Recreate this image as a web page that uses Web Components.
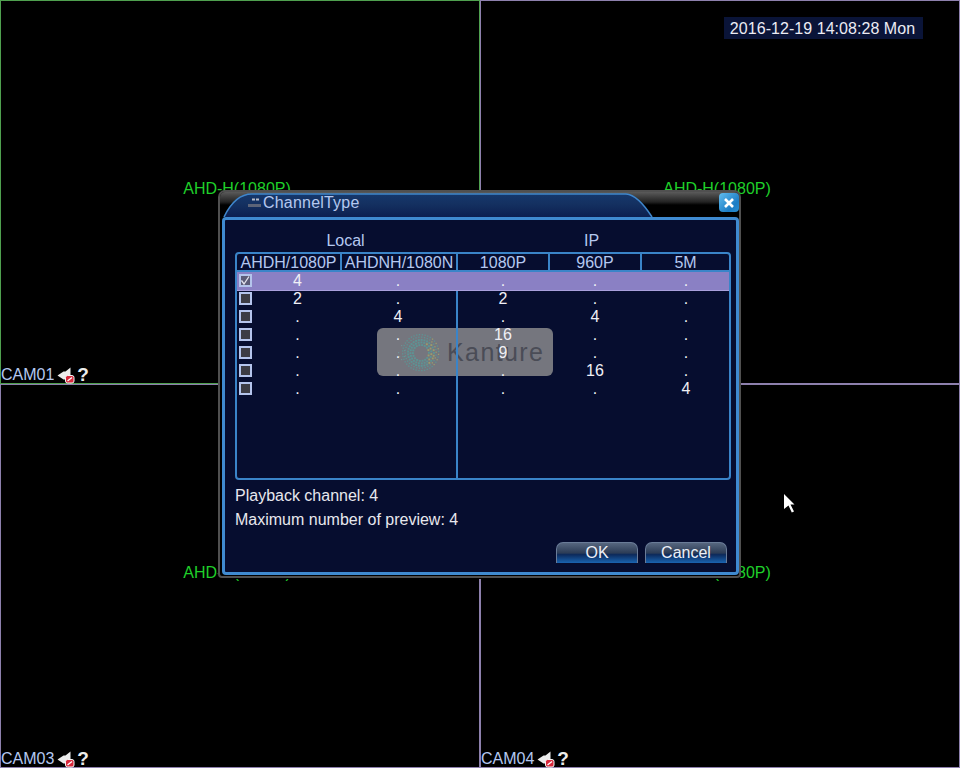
<!DOCTYPE html>
<html>
<head>
<meta charset="utf-8">
<style>
  html, body { margin: 0; padding: 0; background: #000; }
  body { width: 960px; height: 768px; overflow: hidden; font-family: "Liberation Sans", Arial, sans-serif; }
</style>
</head>
<body>
<dvr-screen>
  <cam-cell name="CAM01" mode="AHD-H(1080P)" line="#4fa04f"></cam-cell>
  <cam-cell name="" mode="AHD-H(1080P)" line="#8d80ad"></cam-cell>
  <cam-cell name="CAM03" mode="AHD-H(1080P)" line="#8d80ad"></cam-cell>
  <cam-cell name="CAM04" mode="AHD-H(1080P)" line="#8d80ad"></cam-cell>
  <dvr-clock slot="over">2016-12-19 14:08:28 Mon</dvr-clock>
  <channel-dialog slot="over"></channel-dialog>
  <mouse-arrow slot="over"></mouse-arrow>
</dvr-screen>

<script>
class DvrScreen extends HTMLElement {
  constructor() {
    super();
    this.attachShadow({ mode: "open" });
  }

  connectedCallback() {
    this.shadowRoot.innerHTML = `
      <style>
        :host { display: block; position: relative; width: 960px; height: 768px; background: #000; overflow: hidden; }
        .grid { display: grid; grid-template-columns: 480px 480px; grid-template-rows: 384px 384px; }
      </style>
      <div class="grid"><slot></slot></div>
      <slot name="over"></slot>
    `;
  }
}

class CamCell extends HTMLElement {
  constructor() {
    super();
    this.attachShadow({ mode: "open" });
  }

  connectedCallback() {
    const name = this.getAttribute("name");
    const mode = this.getAttribute("mode");
    const line = this.getAttribute("line");
    const status = name ? `
      <div class="status">
        <span>${name}</span>
        <svg width="18" height="17" viewBox="0 0 18 17">
          <path d="M0.5 8.5l6-4h2l5-4v16l-5-4h-2z" fill="#ececec"/>
          <rect x="8.5" y="8.5" width="8.5" height="7.5" rx="2" fill="#d8283c" stroke="#f4f4f4" stroke-width="1"/>
          <path d="M10.5 14l4.5-3.5" stroke="#fff" stroke-width="1.3"/>
        </svg>
        <b>?</b>
      </div>` : "";
    this.shadowRoot.innerHTML = `
      <style>
        :host { display: flex; flex-direction: column; box-sizing: border-box; border: 1px solid ${line}; font-family: "Liberation Sans", Arial, sans-serif; }
        .mode { margin-top: 179px; height: 18px; line-height: 18px; text-align: center; color: #1fd02a; font-size: 16px; transform: translateX(-3px); }
        .status { margin-top: auto; display: flex; align-items: center; height: 18px; box-sizing: border-box; padding-top: 2px; color: #b4c8f0; font-size: 16px; }
        svg { margin-left: 3px; flex: none; }
        b { color: #ececec; font-size: 19px; margin-left: 2px; font-weight: 700; }
      </style>
      <div class="mode">${mode}</div>
      ${status}
    `;
  }
}

class DvrClock extends HTMLElement {
  constructor() {
    super();
    this.attachShadow({ mode: "open" });
  }

  connectedCallback() {
    this.shadowRoot.innerHTML = `
      <style>
        :host { position: absolute; left: 724px; top: 17px; width: 199px; height: 22px; box-sizing: border-box; padding: 1px 2px 0 0; display: flex; align-items: center; justify-content: center; background: #0a1438; color: #ececf4; font: 16px "Liberation Sans", Arial, sans-serif; letter-spacing: 0.05px; }
      </style>
      <slot></slot>
    `;
  }
}

class ChannelDialog extends HTMLElement {
  constructor() {
    super();
    this.attachShadow({ mode: "open" });
  }

  connectedCallback() {
    const rows = [
      ["4", ".", ".", ".", "."],
      ["2", ".", "2", ".", "."],
      [".", "4", ".", "4", "."],
      [".", ".", "16", ".", "."],
      [".", ".", "9", ".", "."],
      [".", ".", ".", "16", "."],
      [".", ".", ".", ".", "4"],
    ];
    const rowHtml = rows.map((r, i) => `
      <div class="row ${i === 0 ? "sel" : ""}">
        <i class="check">${i === 0 ? `<svg width="9" height="9" viewBox="0 0 9 9"><path d="M0.5 4.5l2.5 3.5 5-7.5" fill="none" stroke="#e4e4ee" stroke-width="1.3"/></svg>` : ""}</i>
        ${r.map((v) => `<span>${v}</span>`).join("")}
      </div>`).join("");
    this.shadowRoot.innerHTML = `
      <style>
        :host { position: absolute; left: 218px; top: 190px; width: 523px; height: 388px; box-sizing: border-box; background: #000; border: 2px solid #505050; border-radius: 7px 7px 4px 4px; box-shadow: 0 1px 0 #000; font-family: "Liberation Sans", Arial, sans-serif; color: #e8e8ee; display: flex; flex-direction: column; padding: 0 0 1px 2px; }
        .head { height: 25px; position: relative; margin-left: -2px; background: linear-gradient(#5a5a5a, #222 10px, #000 13px); border-radius: 5px 5px 0 0; }
        .tab { position: absolute; left: 2px; top: 0; }
        .title { position: absolute; left: 43px; top: 2px; color: #b4c8f0; font-size: 16px; letter-spacing: 0.2px; }
        .glyph { position: absolute; left: 28px; top: 5px; }
        .close { position: absolute; right: 0; top: 1px; width: 20px; height: 19px; border-radius: 4px; background: linear-gradient(135deg, #62bdee, #1c7cc4 70%, #2a90d4); display: flex; align-items: center; justify-content: center; }
        .body { flex: 1; box-sizing: border-box; background: #060d2f; border: 3px solid #3f8ad0; border-radius: 4px; padding: 12px 0 0 10px; display: flex; flex-direction: column; }
        .groups { display: grid; grid-template-columns: 221px 271px; width: 496px; height: 20px; color: #b4c8f0; font-size: 16px; line-height: 17px; text-align: center; }
        .table { position: relative; width: 496px; height: 228px; flex: none; box-sizing: border-box; border: 2px solid #3a84c8; border-radius: 4px; }
        .vline { position: absolute; left: 219px; top: 18px; bottom: 0; width: 2px; background: #3a84c8; z-index: 1; }
        .cols, .row { display: grid; grid-template-columns: 103px 116px 92px 92px 89px; }
        .cols { height: 18px; box-sizing: border-box; color: #b4c8f0; font-size: 16px; line-height: 17px; text-align: center; border-bottom: 2px solid #3a84c8; }
        .cols span { white-space: nowrap; }
        .cols span + span { border-left: 2px solid #3a84c8; }
        .row { height: 18px; position: relative; z-index: 2; font-size: 16px; line-height: 17px; text-align: center; color: #f0f0f6; }
        .row span:nth-of-type(1) { padding-left: 18px; }
        .row span:nth-of-type(n+3) { padding-left: 2px; }
        .row span:nth-of-type(5) { padding-left: 3px; }
        .sel { background: #8a80c4; box-shadow: 0 1px 0 #a9a0dc; z-index: 3; }
        .check { position: absolute; left: 2px; top: 2px; width: 9px; height: 9px; border: 2px solid #b4c4ec; background: #3c3c44; }
        .sel .check { background: #5c5c78; }
        .check svg { display: block; }
        .info { margin-top: 4px; font-size: 16px; line-height: 24px; }
        .foot { display: flex; justify-content: flex-end; gap: 7px; padding-right: 9px; margin-top: 10px; }
      </style>
      <div class="head">
        <svg class="tab" width="517" height="25" viewBox="0 0 517 25">
          <defs><linearGradient id="g" x1="0" y1="0" x2="0" y2="1"><stop offset="0" stop-color="#16386c"/><stop offset="0.45" stop-color="#143060"/><stop offset="1" stop-color="#0c1f50"/></linearGradient></defs>
          <path d="M2 25 Q13 2 30 2 H404 Q416 3 430 25Z" fill="url(#g)"/>
          <path d="M2 25 Q13 2 30 2 H404 Q416 3 430 25" fill="none" stroke="#3f86cc" stroke-width="1.6"/>
        </svg>
        <svg class="glyph" width="14" height="12" viewBox="0 0 14 12"><path d="M0 7h13v3H0z" fill="#5c6478"/><path d="M4 1.5h3v2H4zM8 1.5h3v2H8z" fill="#b8bcc8"/></svg>
        <span class="title">ChannelType</span>
        <span class="close"><svg width="12" height="12" viewBox="0 0 12 12"><path d="M2 2l8 8M10 2l-8 8" stroke="#fff" stroke-width="2.6"/></svg></span>
      </div>
      <div class="body">
        <div class="groups"><span>Local</span><span>IP</span></div>
        <div class="table">
          <kanture-mark></kanture-mark>
          <div class="vline"></div>
          <div class="cols"><span>AHDH/1080P</span><span>AHDNH/1080N</span><span>1080P</span><span>960P</span><span>5M</span></div>
          ${rowHtml}
        </div>
        <div class="info">Playback channel: 4<br>Maximum number of preview: 4</div>
        <div class="foot"><dvr-button>OK</dvr-button><dvr-button>Cancel</dvr-button></div>
      </div>
    `;
  }
}

class DvrButton extends HTMLElement {
  constructor() {
    super();
    this.attachShadow({ mode: "open" });
  }

  connectedCallback() {
    this.shadowRoot.innerHTML = `
      <style>
        :host { display: flex; width: 82px; height: 21px; align-items: center; justify-content: center; box-sizing: border-box; color: #ecf0f8; font-size: 16px; border-radius: 7px 7px 0 0; border: 1px solid #6a7c98; border-bottom: 0; background: linear-gradient(#56667f 0%, #2c3c56 50%, #0c2a5c 58%, #1a64b0 100%); }
      </style>
      <slot></slot>
    `;
  }
}

class KantureMark extends HTMLElement {
  constructor() {
    super();
    this.attachShadow({ mode: "open" });
  }

  connectedCallback() {
    // dotted ring of the logo, teal with a yellow right side
    let dots = "";
    for (let r = 8; r <= 18; r += 2.5) {
      const n = Math.round(r * 2.2);
      for (let i = 0; i < n; i++) {
        const a = (i / n) * Math.PI * 2 + r;
        const x = 24 + r * Math.cos(a);
        const y = 24 + r * Math.sin(a);
        const yellow = Math.cos(a) > 0.55 && i % 2 === 0;
        const size = r > 15 ? 1.3 : 1.9;
        dots += `<rect x="${x.toFixed(1)}" y="${y.toFixed(1)}" width="${size}" height="${size}" fill="${yellow ? "#9a9c6c" : "#5c9494"}"/>`;
      }
    }
    // loose dots fading out on the left
    [[2, 24], [5, 17], [5, 31], [8, 22], [8, 28], [3, 28]].forEach(([x, y]) => {
      dots += `<rect x="${x}" y="${y}" width="1.2" height="1.2" fill="#6f8f92"/>`;
    });
    this.shadowRoot.innerHTML = `
      <style>
        :host { position: absolute; left: 140px; top: 74px; width: 176px; height: 48px; border-radius: 6px; background: #75767e; box-sizing: border-box; padding: 0 0 0 19px; display: flex; align-items: center; gap: 3px; font: 25px "Liberation Sans", Arial, sans-serif; color: #4a4c56; letter-spacing: 1.4px; }
        svg { flex: none; }
      </style>
      <svg width="48" height="48" viewBox="0 0 48 48">${dots}</svg>
      <span>Kanture</span>
    `;
  }
}

class MouseArrow extends HTMLElement {
  constructor() {
    super();
    this.attachShadow({ mode: "open" });
  }

  connectedCallback() {
    this.shadowRoot.innerHTML = `
      <style>:host { position: absolute; left: 784px; top: 494px; width: 12px; height: 20px; }</style>
      <svg width="12" height="20" viewBox="0 0 12 20"><path d="M0 0l10.5 10.5H6.5l3.5 7-2.2 1-3.3-7L0 15z" fill="#fff"/></svg>
    `;
  }
}

customElements.define("dvr-screen", DvrScreen);
customElements.define("cam-cell", CamCell);
customElements.define("dvr-clock", DvrClock);
customElements.define("channel-dialog", ChannelDialog);
customElements.define("dvr-button", DvrButton);
customElements.define("kanture-mark", KantureMark);
customElements.define("mouse-arrow", MouseArrow);
</script>
</body>
</html>
